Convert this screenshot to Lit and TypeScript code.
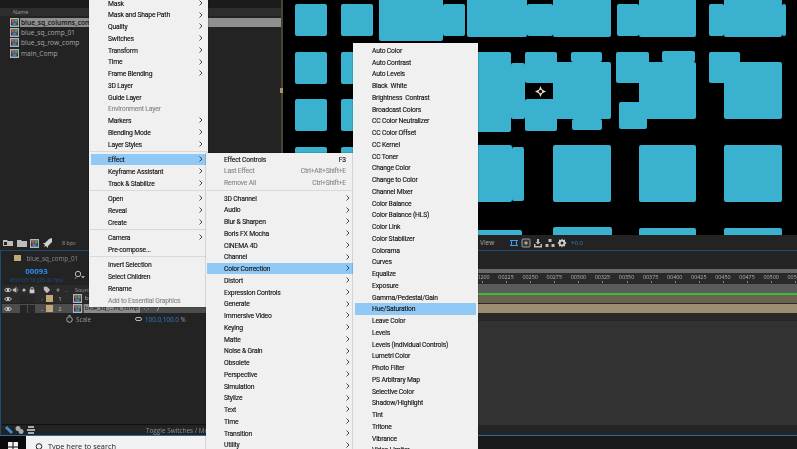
import { LitElement, html, css } from 'lit';
import { customElement } from 'lit/decorators.js';

type MenuItem = { t?: string; arrow?: boolean; off?: boolean; on?: boolean; key?: string; sep?: boolean };

const items = (names: string, arrow = false): MenuItem[] =>
  names.split('|').map((t) => ({ t, arrow }));

const SEP: MenuItem = { sep: true };

const MENU_LAYER: MenuItem[] = [
  ...items('Mask|Mask and Shape Path|Quality|Switches|Transform|Time|Frame Blending', true),
  ...items('3D Layer|Guide Layer'),
  { t: 'Environment Layer', off: true },
  ...items('Markers|Blending Mode|Layer Styles', true),
  SEP,
  { t: 'Effect', arrow: true, on: true },
  ...items('Keyframe Assistant|Track & Stabilize', true),
  SEP,
  ...items('Open|Reveal|Create', true),
  SEP,
  { t: 'Camera', arrow: true },
  { t: 'Pre-compose...' },
  SEP,
  ...items('Invert Selection|Select Children|Rename'),
  { t: 'Add to Essential Graphics', off: true },
];

const MENU_EFFECT: MenuItem[] = [
  { t: 'Effect Controls', key: 'F3' },
  { t: 'Last Effect', off: true, key: 'Ctrl+Alt+Shift+E' },
  { t: 'Remove All', off: true, key: 'Ctrl+Shift+E' },
  SEP,
  ...items('3D Channel|Audio|Blur & Sharpen|Boris FX Mocha|CINEMA 4D|Channel', true),
  { t: 'Color Correction', arrow: true, on: true },
  ...items(
    'Distort|Expression Controls|Generate|Immersive Video|Keying|Matte|Noise & Grain|Obsolete|Perspective|Simulation|Stylize|Text|Time|Transition|Utility',
    true,
  ),
];

const MENU_COLOR: MenuItem[] = [
  ...items(
    'Auto Color|Auto Contrast|Auto Levels|Black  White|Brightness  Contrast|Broadcast Colors|CC Color Neutralizer|CC Color Offset|CC Kernel|CC Toner|Change Color|Change to Color|Channel Mixer|Color Balance|Color Balance (HLS)|Color Link|Color Stabilizer|Colorama|Curves|Equalize|Exposure|Gamma/Pedestal/Gain',
  ),
  { t: 'Hue/Saturation', on: true },
  ...items(
    'Leave Color|Levels|Levels (Individual Controls)|Lumetri Color|Photo Filter|PS Arbitrary Map|Selective Color|Shadow/Highlight|Tint|Tritone|Vibrance|Video Limiter',
  ),
];

// x1, x2, y1, y2 of every blue block on the comp canvas
const BLOCKS = [
  [295, 327, 4, 36], [341, 373, 4, 36], [379, 443, -2, 41], [443, 465, 4, 36],
  [467, 527, -2, 37], [527, 553, 4, 36], [553, 611, -2, 37],
  [617, 639, 4, 36], [639, 696, -2, 37],
  [709, 724, 4, 36], [724, 782, -2, 37], [782, 786, 4, 36],
  [295, 327, 52, 84], [341, 373, 52, 84], [295, 327, 99, 131], [341, 373, 99, 131],
  [295, 327, 147, 200], [341, 373, 147, 200],
  [460, 511, 52, 132], [511, 525, 63, 119],
  [525, 557, 52, 83], [525, 557, 99, 131], [553, 611, 62, 119],
  [571, 602, 52, 62], [572, 602, 119, 130],
  [616, 649, 52, 83], [662, 695, 51, 62], [639, 696, 62, 119], [619, 647, 102, 129],
  [709, 740, 52, 83], [724, 782, 62, 119],
  [460, 512, 145, 202], [512, 524, 147, 201], [553, 611, 145, 202], [639, 696, 145, 202], [724, 782, 145, 202],
  [460, 522, 230, 240], [553, 612, 227, 240], [639, 696, 228, 240], [724, 782, 228, 240],
];

const RULER = ['00200', '00225', '00250', '00275', '00300', '00325', '00350', '00375', '00400', '00425', '00450', '00475', '00500', '00525'];

const compIcon = html`<svg class="ic comp" width="9" height="9" viewBox="0 0 9 9">
  <rect width="9" height="9" fill="#b4b4b4"/><rect x="1" y="1.500" width="7" height="6" fill="#2c3a44"/>
  <rect x="1.500" y="2" width="2.500" height="2.500" fill="#c8504a"/><rect x="4.500" y="2" width="3" height="2.500" fill="#4f9f58"/>
  <rect x="2.500" y="4.800" width="4" height="2.200" fill="#4a78c8"/>
</svg>`;

const eye = html`<svg class="ic" width="8" height="6" viewBox="0 0 8 6">
  <path d="M.5 3C2 .8 6 .8 7.500 3 6 5.200 2 5.200 .5 3Z" fill="none" stroke="#cfcfcf" stroke-width=".9"/><circle cx="4" cy="3" r="1.200" fill="#cfcfcf"/>
</svg>`;

function toolIcon(d: string, color = '#bdbdbd') {
  return html`<svg class="ic" width="10" height="10" viewBox="0 0 10 10"><path d=${d} fill=${color}/></svg>`;
}

@customElement('ae-menu')
export class AeMenu extends LitElement {
  static properties = { rows: { attribute: false } };
  rows: MenuItem[] = [];

  static styles = css`
    :host { display: block; background: #f0f0f0; box-shadow: 0 0 1px rgba(0, 0, 0, 0.7); }
    .row {
      box-sizing: border-box;
      height: 11.76px;
      margin: 0 var(--inset-r, 2px) 0 var(--inset-l, 2px);
      padding: 1.5px 2px 0 var(--text-x, 17px);
      display: flex;
      align-items: center;
      justify-content: space-between;
      font: 6.8px/10px Roboto, sans-serif;
      letter-spacing: -0.2px;
      -webkit-text-stroke: 0.12px currentColor;
      color: #141414;
      white-space: pre;
    }
    .row.on { background: #90c8f6; }
    .row.off, .row.off .key { color: #8b8b8b; }
    .key { margin-right: 5px; }
    .sep { height: 3.76px; display: flex; align-items: center; margin: 0 1px; }
    .sep::after { content: ''; flex: 1; height: 1px; background: #d9d9d9; }
    .arrow { width: 6px; height: 8px; margin-top: -1.5px; }
  `;

  render() {
    return this.rows.map((r) =>
      r.sep
        ? html`<div class="sep"></div>`
        : html`<div class="row ${r.on ? 'on' : ''} ${r.off ? 'off' : ''}">
            <span>${r.t}</span>
            ${r.key ? html`<span class="key">${r.key}</span>` : ''}
            ${r.arrow
              ? html`<svg class="arrow" viewBox="0 0 6 8"><path d="M1.500 1.500 4 4 1.500 6.500" fill="none" stroke="#333" stroke-width=".9"/></svg>`
              : ''}
          </div>`,
    );
  }
}

@customElement('app-root')
export class AppRoot extends LitElement {
  static styles = css`
    :host {
      display: block;
      position: relative;
      width: 797px;
      height: 449px;
      overflow: hidden;
      background: #1a1a1a;
      font-family: 'Open Sans', sans-serif;
    }
    .page { display: flex; flex-direction: column; height: 449px; filter: blur(0.3px); }
    .ic { display: block; flex: none; }

    .workspace { flex: none; display: flex; height: 250px; }
    .project { flex: 0 0 281px; display: flex; flex-direction: column; background: #232323; }
    .project-top { height: 8px; background: #1b1b1b; }
    .project-head {
      height: 8px;
      padding-left: 13px;
      background: #2d2d2d;
      color: #9a9a9a;
      font-size: 5.5px;
      line-height: 8px;
    }
    .files { flex: 1; padding-top: 1px; }
    .file { display: flex; align-items: center; gap: 1px; height: 10.4px; padding-left: 10px; color: #a8a8a8; font-size: 6.6px; }
    .file span { padding: 0 1px; line-height: 9px; flex: 1; }
    .file.sel span { background: #8f8f8f; color: #111; font-weight: 600; }
    .project-tools { display: flex; align-items: center; height: 12px; padding: 0 0 1px 3px; gap: 3.5px; font-size: 5.5px; color: #999; }
    .bpc { margin: 0 9px 0 6px; }

    .split { flex: 0 0 2px; background: #4a4234; position: relative; }
    .split::after { content: ''; position: absolute; left: -1px; top: 88px; width: 4px; height: 5px; background: #a8946a; }

    .viewer { flex: 1; display: flex; flex-direction: column; min-width: 0; }
    .canvas { flex: 0 0 235px; position: relative; overflow: hidden; background: #000; }
    .block { position: absolute; background: #3ab1cf; border-radius: 2px; }
    .anchor { position: absolute; left: 252px; top: 85.5px; }
    .viewer-tools { flex: 1; display: flex; align-items: center; gap: 2px; padding-left: 197px; background: #232323; font-size: 6.5px; color: #aaa; }
    .view-label { width: 27px; }
    .plus { margin-left: 2px; color: #2f7fd6; font-size: 6px; }

    .timeline { flex: none; box-sizing: border-box; display: flex; height: 186px; background: #232323; border-top: 1px solid #1d4a70; border-bottom: 1px solid #2b6ba3; }
    .left { flex: 0 0 205px; box-sizing: border-box; display: flex; flex-direction: column; border-left: 1px solid #1d4a70; padding-left: 1px; border-right: 1px solid #111; }
    .tab { display: flex; align-items: center; gap: 6px; height: 14px; padding-left: 12px; font-size: 6.3px; color: #8a8a8a; }
    .chip { width: 6.5px; height: 6.5px; background: #c0a878; flex: none; }
    .timecode { height: 20px; display: flex; align-items: flex-start; }
    .code { width: 69px; text-align: center; line-height: 8px; color: #2f8cee; font-size: 7.8px; font-weight: 700; padding-top: 2px; }
    .code small { display: block; margin-top: 1.5px; font-size: 5.4px; font-weight: 400; color: #1f5288; line-height: 6px; white-space: nowrap; }
    .search { margin: 5px 0 0 3px; }
    .head { display: flex; align-items: center; height: 9px; padding-left: 2px; background: #2a2a2a; font-size: 5.5px; color: #999; }
    .head .ic { width: 8px; height: 8px; }
    .head-gap { width: 7px; }
    .head-num { width: 14px; text-align: center; }
    .head-dots { width: 10px; }
    .layer { display: flex; align-items: center; height: 9px; margin-bottom: 1px; padding-left: 2px; background: #2b2b2b; font-size: 6px; color: #bbb; }
    .layer.sel { background: #4d4d4d; }
    .dim { width: 7px; height: 8px; margin-right: 1px; background: #262626; }
    .dim.first { margin-left: 8px; }
    .tw { width: 6px; margin: 0 1px 0 3px; font-size: 5px; color: #999; text-align: center; }
    .num { width: 15px; margin-right: 5.5px; text-align: center; }
    .layer-name { width: 55px; margin-left: 2px; padding-left: 1px; font-size: 6px; line-height: 9px; white-space: nowrap; }
    .sel .layer-name { background: #8b8b8b; color: #111; }
    .layer-sw { margin-left: 4px; color: #ccc; }
    .layer-sw.slash { margin-left: 8px; }
    .scale { display: flex; align-items: center; height: 10px; padding-left: 64px; font-size: 6.3px; color: #9a9a9a; }
    .scale b { font-weight: 400; color: #2f7fd6; }
    .scale-name { width: 59px; margin-left: 3px; }
    .scale-val { margin-left: 3px; white-space: nowrap; }
    .grow { flex: 1; }
    .status { display: flex; align-items: center; height: 10px; gap: 1px; padding-left: 2px; border-top: 1px solid #111; font-size: 6.4px; color: #8e8e8e; white-space: nowrap; overflow: hidden; }
    .toggle { margin-left: 109px; }

    .right { flex: 1; display: flex; flex-direction: column; min-width: 0; }
    .r-top { height: 18px; background: #232323; }
    .r-bar { height: 4px; background: #696969; }
    .ruler { display: flex; height: 11px; padding-left: 250px; background: #2a2a2a; overflow: hidden; }
    .ruler div { flex: 0 0 24.1px; position: relative; text-align: center; font-size: 5.4px; line-height: 8px; color: #b5b5b5; }
    .ruler div::after { content: ''; position: absolute; left: 12px; bottom: 1px; width: 1px; height: 2px; background: #888; }
    .r-work { height: 9px; background: #5b5b5b; }
    .r-green { height: 1.500px; background: #35c235; }
    .r-dark { height: 8px; background: #6b6350; border-bottom: 1px solid #2c2a24; }
    .r-tan { height: 9px; background: #9c8e72; }
    .r-rest { height: 7px; background: #2a2a2a; border-bottom: 1px solid #262626; }
    .r-empty { flex: 1; background: #323232; }
    .r-status { height: 10px; background: #252525; }

    .taskbar { flex: 1; min-height: 0; overflow: hidden; display: flex; background: #1a1a1a; }
    .start { flex: 0 0 26px; display: flex; justify-content: center; padding-top: 6px; box-sizing: border-box; background: #0b0b0b; }
    .searchbox { flex: 0 0 452px; display: flex; align-items: flex-start; gap: 5px; padding: 5px 0 0 8px; box-sizing: border-box; background: #f2f2f2; color: #222; font-size: 7.4px; line-height: 11px; }
    .searchbox svg { margin-top: 2px; }

    .menu { position: absolute; }
    .m1 { left: 89px; top: -3px; width: 119px; height: 310px; --text-x: 17px; }
    .m2 { left: 206px; top: 153px; width: 147px; height: 300px; --inset-l: 1px; --inset-r: 0px; --text-x: 17px; }
    .m3 { left: 353px; top: 43px; width: 125px; height: 410px; padding-top: 1.300px; box-sizing: border-box; --text-x: 17px; }
  `;

  render() {
    return html`
      <div class="page">
        <div class="workspace">
          <section class="project">
            <div class="project-top"></div>
            <div class="project-head">Name</div>
            <div class="files">
              <div class="file sel">${compIcon}<span>blue_sq_columns_comp</span></div>
              <div class="file">${compIcon}<span>blue_sq_comp_01</span></div>
              <div class="file">${compIcon}<span>blue_sq_row_comp</span></div>
              <div class="file">${compIcon}<span>main_Comp</span></div>
            </div>
            <div class="project-tools">
              ${toolIcon('M0 2h4l1 1h5v5H0ZM1 4v3h3V4Z')}
              ${toolIcon('M0 2h4l1 1h5v6H0Z')}
              ${compIcon}
              ${toolIcon('M9 0 6 1 2 5 0 5 2 7 1 9 3 8 5 10 5 8 9 4Z', '#d0d0d0')}
              <span class="bpc">8 bpc</span>
              ${toolIcon('M2 2h6v1H2ZM3 3.500h4V9H3Z', '#777')}
            </div>
          </section>
          <div class="split"></div>
          <section class="viewer">
            <div class="canvas">
              ${BLOCKS.map(
                ([x1, x2, y1, y2]) =>
                  html`<div class="block" style="left:${x1 - 283}px;top:${y1}px;width:${x2 - x1}px;height:${y2 - y1}px"></div>`,
              )}
              <svg class="anchor" width="11" height="11" viewBox="0 0 11 11">
                <path d="M5.500 0 7 3.500 11 5.500 7 7.500 5.500 11 4 7.500 0 5.500 4 3.500Z" fill="#e8dcc0"/>
                <circle cx="5.500" cy="5.500" r="1.700" fill="#111"/>
              </svg>
            </div>
            <div class="viewer-tools">
              <span class="view-label">View</span>
              <svg class="ic" width="10" height="10" viewBox="0 0 10 10"><path d="M1 2.500h8M1 7.500h8M2.500 2.500v5M7.500 2.500v5" stroke="#3d9cf0" stroke-width="1.100" fill="none"/></svg>
              <svg class="ic" width="10" height="10" viewBox="0 0 10 10"><rect x="1" y="1" width="8" height="8" rx="1" fill="#333" stroke="#bbb" stroke-width=".8"/><path d="M5 3v4M3 5h4" stroke="#ddd" stroke-width=".8"/></svg>
              ${toolIcon('M1 6h1.500v2h5V6H9v3.500H1ZM4 1h2v3h1.500L5 6.500 2.500 4H4Z')}
              ${toolIcon('M3.500 1h3v3h-3ZM0.500 6h3v3h-3ZM6.500 6h3v3h-3Z')}
              ${toolIcon('M5 .5 6 2 8 1.500 8 3.500 9.500 5 8 6.500 8 8.500 6 8 5 9.500 4 8 2 8.500 2 6.500 .5 5 2 3.500 2 1.500 4 2ZM5 3.500A1.500 1.500 0 1 0 5 6.500 1.500 1.500 0 0 0 5 3.500Z', '#ccc')}
              <span class="plus">+0.0</span>
            </div>
          </section>
        </div>

        <div class="timeline">
          <section class="left">
            <div class="tab"><span class="chip"></span><span>blue_sq_comp_01</span></div>
            <div class="timecode">
              <div class="code">00093<small>0:00:03:18 (25.00 fps)</small></div>
              <svg class="search" width="11" height="10" viewBox="0 0 11 10"><circle cx="4" cy="4" r="2.700" fill="none" stroke="#bbb"/><path d="M2.500 6.500 1 9M7.500 6.500h3L9 8Z" stroke="#bbb" fill="#bbb" stroke-width=".6"/></svg>
            </div>
            <div class="head">
              ${eye}
              ${toolIcon('M1 3.500h2L5.500 1v8L3 6.500H1ZM7 2.500a4 4 0 0 1 0 5', '#bbb')}
              ${toolIcon('M5 3a2 2 0 1 0 0 4 2 2 0 0 0 0-4Z', '#bbb')}
              ${toolIcon('M2 4.500h6V9H2ZM3 4.500V3a2 2 0 0 1 4 0v1.500H6V3a1 1 0 0 0-2 0v1.500Z', '#ccc')}
              <span class="head-gap"></span>
              ${toolIcon('M1 1h4l4 4-4 4-4-4Z', '#bbb')}
              <span class="head-num">#</span>
              <span class="head-dots">..</span>
              <span>Source</span>
            </div>
            <div class="layer">
              ${eye}<span class="dim first"></span><span class="dim"></span>
              <span class="tw">&rsaquo;</span><span class="chip"></span>
              <span class="num">1</span>${compIcon}
              <span class="layer-name">blue_sq_...ns_comp</span>
            </div>
            <div class="layer sel">
              ${eye}<span class="dim first"></span><span class="dim"></span>
              <span class="tw">&#8964;</span><span class="chip"></span>
              <span class="num">2</span>${compIcon}
              <span class="layer-name">blue_sq_...ns_comp</span>
              <span class="layer-sw">&#8280;</span>
              <span class="layer-sw slash">/</span>
            </div>
            <div class="scale">
              <svg class="ic" width="7" height="8" viewBox="0 0 7 8"><circle cx="3.500" cy="4.500" r="2.800" fill="none" stroke="#bbb" stroke-width=".9"/><path d="M2.500.7h2" stroke="#bbb"/></svg>
              <span class="scale-name">Scale</span>
              <svg class="ic" width="7" height="4" viewBox="0 0 7 4"><rect x=".5" y=".5" width="6" height="3" rx="1.500" fill="none" stroke="#bbb"/></svg>
              <span class="scale-val"><b>100.0,100.0</b> %</span>
            </div>
            <div class="grow"></div>
            <div class="status">
              ${toolIcon('M1 3 3 1 9 7 7 9Z', '#3d8ed8')}
              ${toolIcon('M3 1a2 2 0 1 0 0 5 2 2 0 0 0 0-5ZM6 4a2.500 2.500 0 1 0 .1 0Z', '#aaa')}
              ${toolIcon('M2 1h6v2H2ZM1 4h8v2H1ZM2 7h6v2H2Z', '#aaa')}
              <span class="toggle">Toggle Switches / Modes</span>
            </div>
          </section>
          <section class="right">
            <div class="r-top"></div>
            <div class="r-bar"></div>
            <div class="ruler">${RULER.map((r) => html`<div>${r}</div>`)}</div>
            <div class="r-work"></div>
            <div class="r-green"></div>
            <div class="r-dark"></div>
            <div class="r-tan"></div>
            <div class="r-rest"></div>
            <div class="r-empty"></div>
            <div class="r-status"></div>
          </section>
        </div>

        <div class="taskbar">
          <div class="start">
            <svg width="10" height="10" viewBox="0 0 10 10"><path d="M0 0h4.500v4.500H0ZM5.500 0H10v4.500H5.500ZM0 5.500h4.500V10H0ZM5.500 5.500H10V10H5.500Z" fill="#f2f2f2"/></svg>
          </div>
          <div class="searchbox">
            <svg width="9" height="9" viewBox="0 0 9 9"><circle cx="5" cy="3.500" r="2.800" fill="none" stroke="#222"/><path d="M3 5.500.8 8" stroke="#222"/></svg>
            <span>Type here to search</span>
          </div>
        </div>
      </div>

      <ae-menu class="menu m1" .rows=${MENU_LAYER}></ae-menu>
      <ae-menu class="menu m2" .rows=${MENU_EFFECT}></ae-menu>
      <ae-menu class="menu m3" .rows=${MENU_COLOR}></ae-menu>
    `;
  }
}
